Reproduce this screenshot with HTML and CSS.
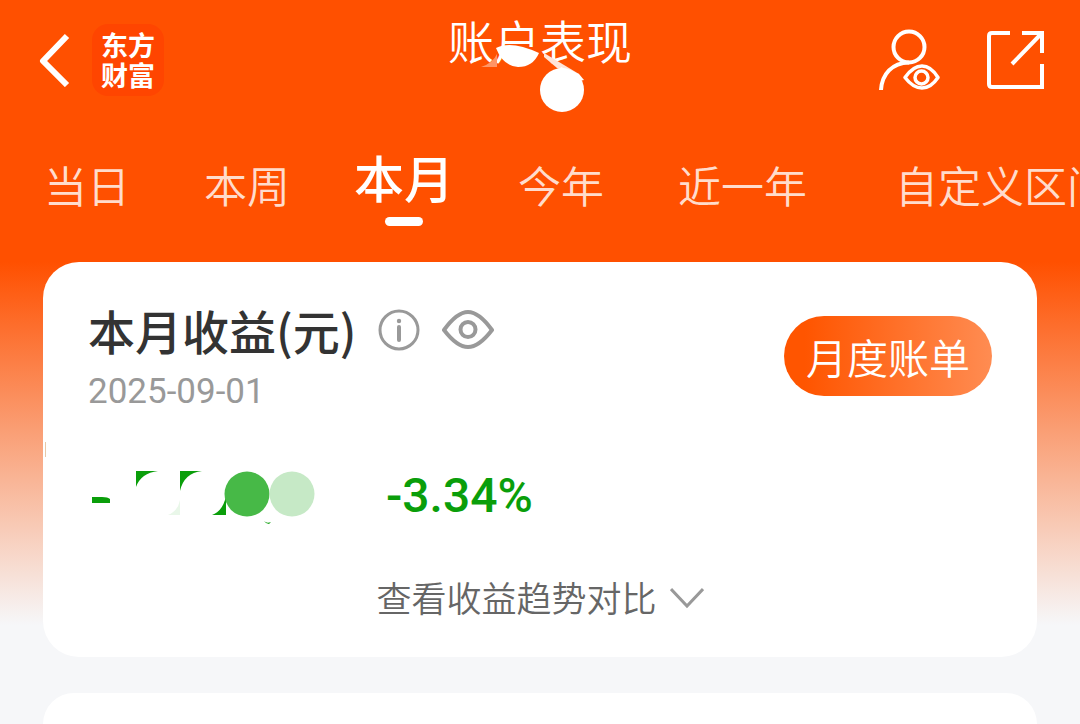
FILE: index.html
```html
<!DOCTYPE html>
<html lang="zh-CN">
<head>
  <meta charset="UTF-8">
  <meta name="viewport" content="width=device-width, initial-scale=1.0">
  <title>账户表现</title>
  <link rel="stylesheet" href="styles.css">
</head>
<body>

<header class="header">
  <div class="header-side">
    <button class="icon-btn" type="button" aria-label="返回">
      <svg width="34" height="54" viewBox="0 0 34 54" fill="none" stroke="#fff" stroke-width="6" stroke-linejoin="round">
        <path d="M31 3L7 28l24 24"/>
      </svg>
    </button>
    <a class="logo" href="#">东方财富</a>
  </div>

  <h1 class="title">账户表现
    <svg class="title-mask" width="110" height="72" viewBox="0 0 110 72">
      <path d="M0 24Q12 20 16 11V24Z" fill="#ff9566"/>
      <path d="M15 5Q30-3 58 10Q52 24 37 24Q22 23 15 5Z" fill="#fff"/>
      <path d="M63 10L98 31L99 36L76 25L63 14Z" fill="#ffe4d9"/>
      <path d="M80 24L98 31L103 37L90 40H70Z" fill="#fff"/>
      <circle cx="81" cy="47" r="22" fill="#fff"/>
    </svg>
  </h1>

  <div class="header-side header-right">
    <button class="icon-btn" type="button" aria-label="账户查看">
      <svg width="62" height="62" viewBox="0 0 62 62" fill="none" stroke="#fff" stroke-width="4">
        <circle cx="31" cy="18" r="15.5"/>
        <path d="M3 61C4 45 14 34 31 33.500"/>
        <path d="M27 48.500Q35 37 44 37T60 48.500Q53 59 44 59T27 48.500Z" stroke-width="3.500" stroke-linejoin="round"/>
        <circle cx="43.500" cy="48.500" r="6.500" stroke-width="3.500"/>
      </svg>
    </button>
    <button class="icon-btn" type="button" aria-label="分享">
      <svg width="58" height="58" viewBox="0 0 58 58" fill="none" stroke="#fff" stroke-width="4">
        <path d="M24 2H6Q3 2 3 5V53Q3 56 6 56H56V33"/>
        <path d="M36 2H56V22M55 3L26 33"/>
      </svg>
    </button>
  </div>
</header>

<nav class="tabs">
  <a class="tab" href="#">当日</a>
  <a class="tab" href="#">本周</a>
  <a class="tab active" href="#">本月</a>
  <a class="tab" href="#">今年</a>
  <a class="tab" href="#">近一年</a>
  <a class="tab custom" href="#">自定义区间</a>
</nav>

<main class="content">
  <section class="card">
    <div class="card-top">
      <div>
        <div class="card-heading">
          <h2>本月收益(元)</h2>
          <button class="icon-btn" type="button" aria-label="说明">
            <svg width="42" height="42" viewBox="0 0 42 42" fill="none" stroke="#999" stroke-width="3">
              <circle cx="21" cy="21" r="19"/>
              <path d="M21 18V31" stroke-width="4" stroke-linecap="round"/>
              <circle cx="21" cy="12" r="2.200" fill="#999" stroke="none"/>
            </svg>
          </button>
          <button class="icon-btn" type="button" aria-label="隐藏金额">
            <svg width="52" height="42" viewBox="0 0 52 42" fill="none" stroke="#999" stroke-width="4" stroke-linejoin="round">
              <path d="M2 21Q15 3 26 3T50 21Q37 38 26 38T2 21Z"/>
              <circle cx="26" cy="20.500" r="7.500"/>
            </svg>
          </button>
        </div>
        <p class="date">2025-09-01</p>
      </div>
      <button class="bill-btn" type="button">月度账单</button>
    </div>

    <div class="profit">
      <!-- masked amount -->
      <svg class="amount" width="230" height="60" viewBox="0 0 230 60">
        <g fill="#0a9e0a">
          <path d="M4 31H14Q20 31 22 33V37H4Z"/>
          <path d="M48 5H70Q53 7 48 21Z"/>
          <path d="M92 5H114Q96 7 92 25Z"/>
          <path d="M138 30V49H124Q135 45 138 30Z"/>
          <path d="M176 55Q179 58 183 56L181 58Q178 58 176 55Z"/>
        </g>
        <path d="M92 34V49H80Q90 45 92 34Z" fill="#e9f7e9"/>
        <circle cx="159" cy="28" r="22.500" fill="#47b947"/>
        <circle cx="204" cy="28" r="22.500" fill="#c6e9c6"/>
      </svg>
      <span class="rate">-3.34%</span>
    </div>

    <a class="more" href="#">查看收益趋势对比
      <svg width="34" height="24" viewBox="0 0 34 24" fill="none" stroke="#999" stroke-width="3">
        <path d="M1 4L17 21L33 4"/>
      </svg>
    </a>
  </section>

  <section class="next-card"></section>
</main>

</body>
</html>
```

FILE: styles.css
```css
* {
  box-sizing: border-box;
}
body {
  display: flex;
  flex-direction: column;
  min-height: 100vh;
  margin: 0;
  font-family: "Noto Sans CJK SC", sans-serif;
  font-weight: 350;
  background: #f6f7f9 linear-gradient(#ff5000 262px, #fa9e74 430px, #f6f7f9 625px) no-repeat;
}
h1, h2, p {
  margin: 0;
}
a {
  color: inherit;
  text-decoration: none;
}
button {
  padding: 0;
  border: none;
  background: none;
  font-family: inherit;
  cursor: pointer;
}
svg {
  display: block;
}
.icon-btn {
  display: flex;
}

/* header */
.header {
  display: flex;
  align-items: flex-start;
  height: 140px;
  padding: 0 36px;
  color: #fff;
}
.header-side {
  display: flex;
  flex: 1;
  align-items: center;
  gap: 22px;
  height: 120px;
}
.header-right {
  justify-content: flex-end;
  gap: 46px;
}
.logo {
  width: 72px;
  height: 72px;
  padding: 6px 9px;
  border-radius: 16px;
  background: #ff4500;
  font-size: 27px;
  font-weight: 700;
  line-height: 30px;
}
.title {
  position: relative;
  font-size: 46px;
  font-weight: 350;
  line-height: 78px;
}
.title-mask {
  position: absolute;
  top: 43px;
  left: 33px;
}

/* period tabs */
.tabs {
  display: flex;
  align-items: flex-start;
  gap: 74px;
  height: 122px;
  padding-left: 44px;
  overflow: hidden;
  white-space: nowrap;
}
.tab {
  flex: none;
  color: #ffdccc;
  font-size: 43px;
  line-height: 88px;
}
.tab.active {
  display: flex;
  flex-direction: column;
  align-items: center;
  gap: 5px;
  margin: 0 -10px;
  color: #fff;
  font-size: 50px;
  font-weight: 500;
  line-height: 72px;
}
.tab.active::after {
  content: "";
  width: 38px;
  height: 9px;
  border-radius: 5px;
  background: #fff;
}
.tab.custom {
  margin-left: 14px;
}

/* cards */
.content {
  display: flex;
  flex: 1;
  flex-direction: column;
  gap: 36px;
  padding: 0 43px;
}
.card {
  position: relative;
  padding: 36px 45px 34px;
  border-radius: 36px;
  background: #fff;
}
.card::before {
  content: "";
  position: absolute;
  top: 180px;
  left: 2px;
  width: 1px;
  height: 15px;
  background: #e8c9a8;
}
.card-top {
  display: flex;
  align-items: flex-start;
  justify-content: space-between;
}
.card-heading {
  display: flex;
  align-items: center;
  gap: 22px;
}
.card-heading h2 {
  color: #333;
  font-size: 47px;
  font-weight: 500;
  line-height: 64px;
}
.date {
  color: #999;
  font-family: Roboto, sans-serif;
  font-size: 35px;
  font-weight: 400;
  line-height: 60px;
}
.bill-btn {
  width: 208px;
  height: 80px;
  margin-top: 18px;
  border-radius: 40px;
  background: linear-gradient(90deg, #ff5500 10%, #ff8c52);
  color: #fff;
  font-size: 41px;
  font-weight: 350;
}
.profit {
  display: flex;
  align-items: center;
  gap: 68px;
  margin-top: 44px;
}
.rate {
  color: #0a9e0a;
  font-family: Roboto, sans-serif;
  font-size: 48px;
  font-weight: 500;
  line-height: 60px;
}
.more {
  display: flex;
  align-items: center;
  justify-content: center;
  gap: 13px;
  margin-top: 45px;
  color: #666;
  font-size: 35px;
  line-height: 52px;
}
.next-card {
  flex: 1;
  border-radius: 36px 36px 0 0;
  background: #fff;
}
```
